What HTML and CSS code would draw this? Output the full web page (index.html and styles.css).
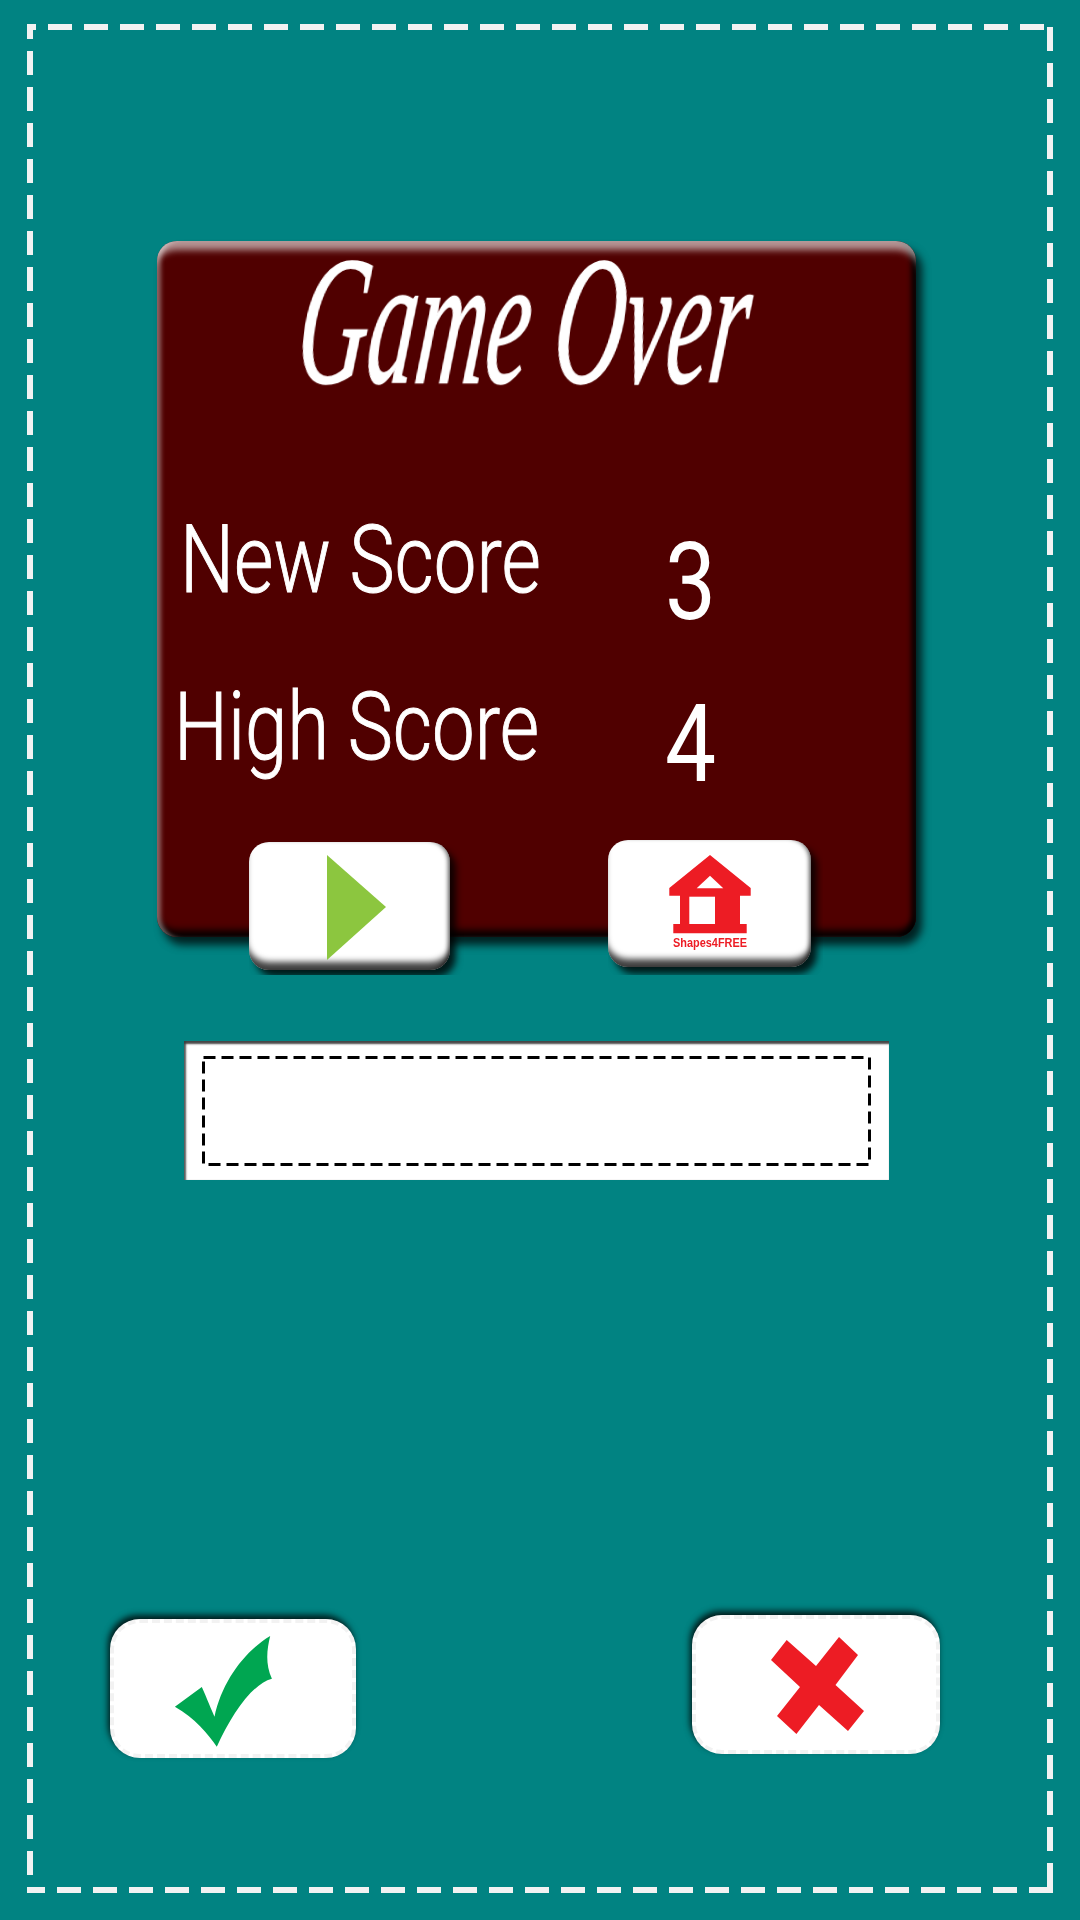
FILE: index.html
```html
<!DOCTYPE html>
<html lang="en">
<head>
<meta charset="utf-8">
<title>Game Over</title>
<link rel="stylesheet" href="styles.css">
</head>
<body>
<main class="screen">
  <svg class="frame" viewBox="0 0 1080 1920" aria-hidden="true">
    <path class="frame-line frame-top" d="M27 27H1044"/>
    <path class="frame-line" d="M1050 27V1887"/>
    <path class="frame-line" d="M1053 1890H27"/>
    <path class="frame-line" d="M30 1875V24"/>
  </svg>

  <section class="panel">
    <h1 class="title"><span>Game Over</span></h1>
    <div class="score-row score-new">
      <span class="score-label">New Score</span>
      <span class="score-value">3</span>
    </div>
    <div class="score-row score-high">
      <span class="score-label">High Score</span>
      <span class="score-value">4</span>
    </div>
    <div class="actions">
      <div class="action action-play">
        <button class="key" type="button" aria-label="Play">
          <svg class="key-icon" viewBox="0 0 201 128"><path fill="#8cc63f" d="M78 13L137 65L78 118Z"/></svg>
        </button>
      </div>
      <div class="action action-home">
        <button class="key" type="button" aria-label="Home">
          <svg class="key-icon" viewBox="0 0 203 127">
            <path fill="#ed1c24" d="M102 15L142.7 48V55.7H132V84H138.7V93.3H65.3V84H72V55.7H61.3V48Z"/>
            <rect fill="#fff" x="81.3" y="56.7" width="25.7" height="27.3"/>
            <path fill="#fff" d="M102 35.7L88.7 48.3H115.3Z"/>
            <text class="brand" x="65" y="106.5" textLength="74" lengthAdjust="spacingAndGlyphs">Shapes4FREE</text>
          </svg>
        </button>
      </div>
    </div>
  </section>

  <section class="slot">
    <svg class="slot-dash" viewBox="0 0 669 110" aria-hidden="true">
      <rect x="1.5" y="1.5" width="666" height="107"/>
    </svg>
  </section>

  <div class="choices">
    <button class="choice choice-yes" type="button" aria-label="Yes">
      <svg viewBox="4 4 238 131"><path fill="#00a651" d="M160.2 17C135 32 112 62 104.5 97.7C99 85 95 75 91.8 68L64.9 87.7C85 99 98 115 106.8 127.7C122 95 142 65 161.9 59.7C155 45 157 30 160.2 17Z"/></svg>
    </button>
    <button class="choice choice-no" type="button" aria-label="No">
      <svg viewBox="4 4 240 131"><path fill="#ed1c24" d="M94.7 25L124 51L147 22L166 40L143.5 70L172 96L156 116L127 90L104.4 119L85 101L108 72L79 45Z"/></svg>
    </button>
  </div>
</main>
</body>
</html>
```
FILE: styles.css
```css
* { box-sizing: border-box; }

html, body {
  margin: 0;
  padding: 0;
  background: #018382;
}

.screen {
  position: relative;
  width: 1080px;
  height: 1920px;
  padding-top: 241px;
  overflow: hidden;
  background: #018382;
  font-family: Roboto, "Liberation Sans", sans-serif;
}

.frame {
  position: absolute;
  top: 0;
  left: 0;
  width: 1080px;
  height: 1920px;
  pointer-events: none;
}

.frame-line {
  fill: none;
  stroke: #f2f2f2;
  stroke-width: 6;
  stroke-dasharray: 24 12;
}

.frame-top { stroke-dashoffset: 15; }

.panel {
  display: flex;
  flex-direction: column;
  width: 759px;
  height: 696px;
  margin-left: 157px;
  border-radius: 20px;
  background: #500000;
  box-shadow:
    inset 0 15px 7px -6px rgba(255, 255, 255, 0.58),
    inset 6px 0 4px -2px rgba(255, 255, 255, 0.38),
    inset -7px 0 5px -2px rgba(0, 0, 0, 0.85),
    inset 0 -10px 7px -3px rgba(0, 0, 0, 0.9),
    6px 8px 8px rgba(0, 0, 0, 0.75);
}

.title {
  height: 130px;
  margin: 15px 0 0 136px;
  color: #fff;
  font-family: "Liberation Serif", serif;
  font-size: 183px;
  font-style: italic;
  font-weight: 400;
  line-height: 130px;
  white-space: nowrap;
}

.title span {
  display: inline-block;
  transform: scaleX(0.53) skewX(-12deg);
  transform-origin: 0 100%;
  -webkit-text-stroke: 1.5px #fff;
  filter: blur(0.7px);
}

.score-row {
  display: flex;
  height: 100px;
  color: #fff;
  line-height: 100px;
}

.score-new { margin-top: 124px; padding-left: 23px; }
.score-high { margin-top: 67px; padding-left: 17px; }

.score-label {
  flex: none;
  font-size: 94px;
  font-weight: 300;
  white-space: nowrap;
  -webkit-text-stroke: 1px #fff;
  transform: scaleX(0.81);
  transform-origin: 0 50%;
  filter: blur(0.7px);
}

.score-value {
  position: absolute;
  left: 665px;
  font-size: 107px;
  font-weight: 400;
  transform: scaleX(0.85);
  transform-origin: 0 50%;
}

.score-new .score-value { margin-top: 23px; }
.score-high .score-value { margin-top: 18px; }

.actions {
  display: flex;
  align-items: flex-end;
  gap: 144px;
  margin-top: auto;
  margin-bottom: -38px;
  padding-left: 92px;
}

.action {
  flex: none;
  width: 215px;
  overflow: hidden;
}

.action-play { height: 133px; }
.action-home { height: 135px; }

.key {
  display: block;
  width: 201px;
  height: 128px;
  padding: 0;
  border: 0;
  border-radius: 20px;
  background: #fff;
  box-shadow:
    inset 0 -11px 6px -3px rgba(0, 0, 0, 0.75),
    inset -4px 0 4px -2px rgba(0, 0, 0, 0.55),
    6px 7px 7px rgba(0, 0, 0, 0.8);
}

.action-home .key {
  width: 203px;
  height: 127px;
}

.key-icon {
  display: block;
  width: 100%;
  height: 100%;
  filter: blur(0.4px);
}

.brand {
  fill: #ed1c24;
  font-family: "Liberation Sans", sans-serif;
  font-size: 12px;
  font-weight: 700;
}

.slot {
  width: 705px;
  height: 139px;
  margin: 104px 0 0 184px;
  padding: 15px 18px 14px 18px;
  background: #fff;
  box-shadow:
    inset 0 4px 2px -1px rgba(60, 60, 60, 0.95),
    inset 3px 0 2px -1px rgba(60, 60, 60, 0.85);
}

.slot-dash {
  display: block;
  width: 669px;
  height: 110px;
}

.slot-dash rect {
  fill: none;
  stroke: #000;
  stroke-width: 3;
  stroke-dasharray: 12 6;
}

.choices {
  display: flex;
  align-items: flex-start;
  gap: 336px;
  margin-top: 435px;
  padding-left: 110px;
}

.choice {
  flex: none;
  height: 139px;
  padding: 0;
  border: 4px dashed #f2f2f2;
  border-radius: 30px;
  background: #fff;
  box-shadow: -2px -4px 6px rgba(0, 0, 0, 0.8);
}

.choice svg {
  display: block;
  width: 100%;
  height: 100%;
}

.choice-yes { width: 246px; margin-top: 4px; }
.choice-no { width: 248px; }
```
